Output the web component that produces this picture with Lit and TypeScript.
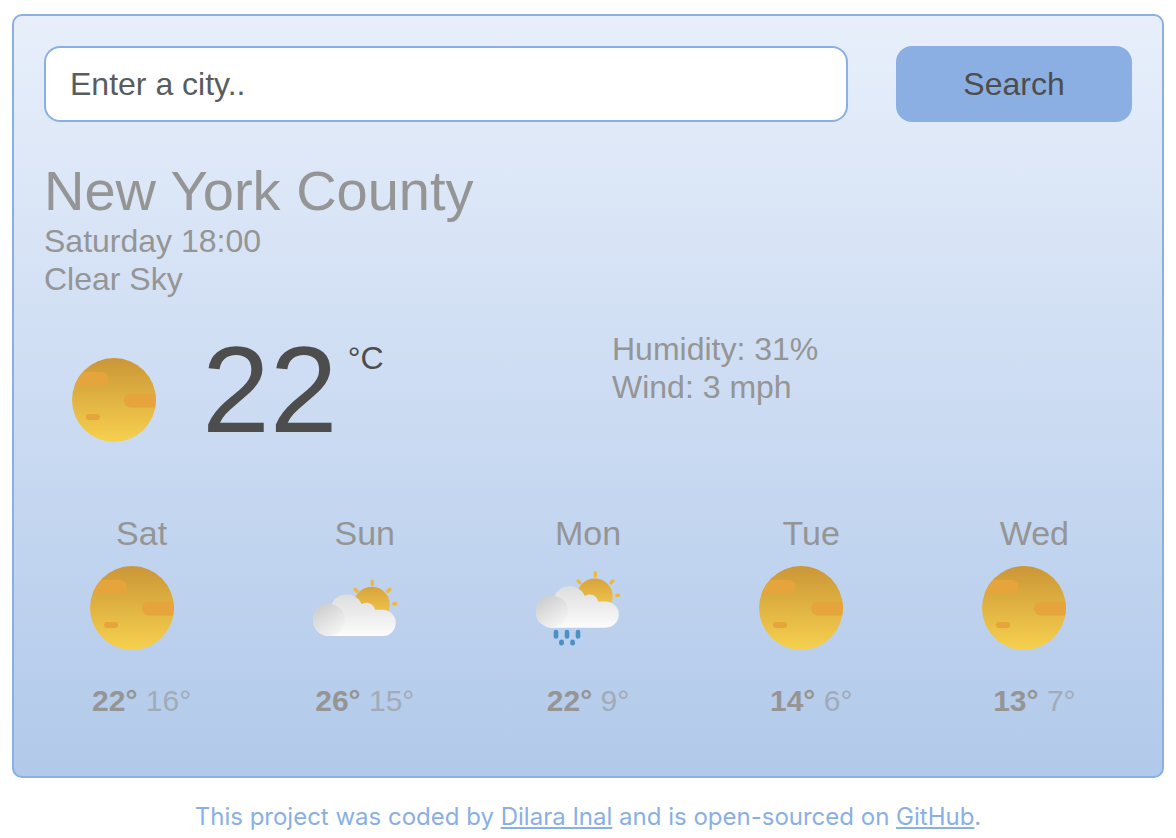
import { LitElement, html, svg, css } from "lit";
import { customElement, property } from "lit/decorators.js";

type Condition = "clear" | "few-clouds" | "rain";

interface ForecastDay {
  name: string;
  condition: Condition;
  max: number;
  min: number;
}

const FORECAST: ForecastDay[] = [
  { name: "Sat", condition: "clear", max: 22, min: 16 },
  { name: "Sun", condition: "few-clouds", max: 26, min: 15 },
  { name: "Mon", condition: "rain", max: 22, min: 9 },
  { name: "Tue", condition: "clear", max: 14, min: 6 },
  { name: "Wed", condition: "clear", max: 13, min: 7 },
];

const sun = svg`
  <defs>
    <linearGradient id="sun" x1="0" y1="0" x2="0" y2="1">
      <stop offset="0" stop-color="#cb9637" />
      <stop offset="1" stop-color="#f6d14e" />
    </linearGradient>
    <clipPath id="disc"><circle cx="42" cy="42" r="42" /></clipPath>
  </defs>
  <circle cx="42" cy="42" r="42" fill="url(#sun)" />
  <g clip-path="url(#disc)" fill="#e5a53c">
    <rect x="-10" y="14" width="46.5" height="14" rx="7" />
    <rect x="52" y="35.5" width="46" height="14" rx="7" />
    <rect x="14" y="56" width="14" height="6" rx="3" />
  </g>`;

const cloud = svg`
  <defs>
    <linearGradient id="halfsun" x1="0" y1="0" x2="0" y2="1">
      <stop offset="0" stop-color="#d8a23c" />
      <stop offset="1" stop-color="#f6d14e" />
    </linearGradient>
    <linearGradient id="cloud" gradientUnits="userSpaceOnUse" x1="0" y1="26" x2="0" y2="70">
      <stop offset="0" stop-color="#dcdcdc" />
      <stop offset="1" stop-color="#fcfcfc" />
    </linearGradient>
    <linearGradient id="puff" x1="0.25" y1="0" x2="0.85" y2="0.9">
      <stop offset="0" stop-color="#cccccc" />
      <stop offset="1" stop-color="#f6f6f6" />
    </linearGradient>
  </defs>
  <g stroke="#f0b73f" stroke-width="3.4" stroke-linecap="round">
    <path d="M59.3 15.3V18.2M80.8 37.7H82.6M74.9 25.2L76.9 23.2M44 25.2L42 23.2" />
  </g>
  <circle cx="58.8" cy="38.7" r="18" fill="url(#halfsun)" />
  <path fill="url(#cloud)" d="M16 70A16.2 16.2 0 0 1 0 53.7A16.2 16.2 0 0 1 18.5 38.2A16.7 16.7 0 0 1 48.8 38.2A8.6 8.6 0 0 1 62 43.7H69.6A13.15 13.15 0 0 1 69.6 70Z" />
  <circle cx="16" cy="53.8" r="16.1" fill="url(#puff)" />`;

const rain = svg`
  <g transform="translate(0 -8.3)">${cloud}</g>
  <g fill="#4b90c6">
    <rect x="17.7" y="63.7" width="4.6" height="9" rx="2.3" />
    <rect x="28.7" y="63.7" width="4.6" height="9" rx="2.3" />
    <rect x="39.7" y="63.7" width="4.6" height="9" rx="2.3" />
    <rect x="23.1" y="73.6" width="4.8" height="6" rx="2.4" />
    <rect x="34.2" y="73.6" width="4.8" height="6" rx="2.4" />
  </g>`;

const DRAWINGS = { clear: sun, "few-clouds": cloud, rain };

@customElement("weather-icon")
export class WeatherIcon extends LitElement {
  @property() condition: Condition = "clear";

  static styles = css`
    :host {
      display: block;
      width: 84px;
      height: 84px;
    }
    .drawing {
      display: block;
      width: 100%;
      height: 100%;
    }
  `;

  render() {
    return html`<svg class="drawing" viewBox="0 0 84 84" role="img" aria-label=${this.condition}>
      ${DRAWINGS[this.condition]}
    </svg>`;
  }
}

@customElement("app-root")
export class AppRoot extends LitElement {
  static styles = css`
    :host {
      display: block;
      padding: 14px 12px 0;
      font-family: "Liberation Sans", Arial, sans-serif;
      font-size: 32px;
      line-height: 38px;
      color: #959595;
    }
    .card {
      padding: 30px 16px 56px;
      border: 2px solid #8aafe5;
      border-radius: 10px;
      background: linear-gradient(180deg, #e8effb, #b1c9ea);
    }
    .row {
      display: grid;
      column-gap: 48px;
      padding: 0 14px;
    }
    .search {
      grid-template-columns: minmax(0, 1fr) calc(25% - 36px);
    }
    .field,
    .submit {
      box-sizing: border-box;
      min-width: 0;
      height: 76px;
      border: 2px solid #8aafe5;
      border-radius: 16px;
      font: inherit;
    }
    .field {
      padding: 0 24px;
      background: #fff;
      color: #212529;
    }
    .field::placeholder {
      color: #595c5f;
      opacity: 1;
    }
    .submit {
      padding: 0;
      border-color: #8bafe3;
      background: #8bafe3;
      color: #4d4d4d;
      cursor: pointer;
    }
    .place {
      padding: 38px 14px 0;
    }
    .city {
      margin: 0;
      font-size: 56px;
      line-height: 62px;
      font-weight: 400;
    }
    .facts {
      margin: 0;
      padding: 0;
      list-style: none;
    }
    .current {
      grid-template-columns: 1fr 1fr;
      padding-top: 32px;
    }
    .now {
      display: flex;
      align-items: flex-start;
      padding-left: 28px;
      color: #4d4d4d;
    }
    .now-icon {
      margin: 28px 46px 0 0;
    }
    .degrees {
      font-size: 122px;
      line-height: 120px;
    }
    .unit {
      margin: 9px 0 0 10px;
    }
    .forecast {
      display: grid;
      grid-template-columns: repeat(5, 1fr);
      padding-top: 64px;
      text-align: center;
    }
    .day {
      display: flex;
      flex-direction: column;
      align-items: center;
    }
    .name {
      font-size: 34px;
    }
    .day-icon {
      margin: 14px 20px 32px 0;
    }
    .range {
      font-size: 30px;
    }
    .min {
      opacity: 0.6;
    }
    .credit {
      padding: 24px 0 6px;
      text-align: center;
      font-family: Inter, sans-serif;
      font-size: 24px;
      line-height: 30px;
      color: #8aafe5;
    }
    .link {
      color: inherit;
    }
  `;

  render() {
    return html`
      <main class="card">
        <form class="row search" @submit=${(e: Event) => e.preventDefault()}>
          <input class="field" type="text" placeholder="Enter a city.." aria-label="Enter a city.." />
          <button class="submit" type="submit">Search</button>
        </form>
        <section class="place">
          <h1 class="city">New York County</h1>
          <ul class="facts">
            <li>Saturday 18:00</li>
            <li>Clear Sky</li>
          </ul>
        </section>
        <section class="row current">
          <div class="now">
            <weather-icon class="now-icon" condition="clear"></weather-icon>
            <span class="degrees">22</span>
            <span class="unit">°C</span>
          </div>
          <ul class="facts">
            <li>Humidity: 31%</li>
            <li>Wind: 3 mph</li>
          </ul>
        </section>
        <section class="forecast">
          ${FORECAST.map(
            (day) => html`<div class="day">
              <span class="name">${day.name}</span>
              <weather-icon class="day-icon" .condition=${day.condition}></weather-icon>
              <span class="range"><strong>${day.max}°</strong> <span class="min">${day.min}°</span></span>
            </div>`
          )}
        </section>
      </main>
      <footer class="credit">
        This project was coded by <a class="link" href="#">Dilara Inal</a> and is open-sourced on
        <a class="link" href="#">GitHub</a>.
      </footer>
    `;
  }
}
